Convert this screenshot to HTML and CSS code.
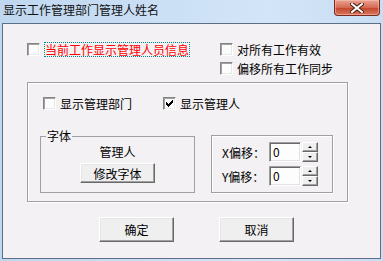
FILE: index.html
```html
<!DOCTYPE html>
<html>
<head>
    <meta charset="utf-8">
    <link rel="stylesheet" href="styles.css">
</head>
<body>
    <div class="window">
        <div class="titlebar">
            <span class="title">显示工作管理部门管理人姓名</span>
            <div class="close-btn">
                <svg width="14" height="10" viewBox="0 0 14 10">
                    <path d="M2 1 L12 9 M12 1 L2 9" stroke="#4a1a12" stroke-width="4" stroke-linecap="square"/>
                    <path d="M2 1 L12 9 M12 1 L2 9" stroke="#fff" stroke-width="2" stroke-linecap="square"/>
                </svg>
            </div>
        </div>
        <div class="client">
            <div class="top-row">
                <label class="check">
                    <span class="box"></span>
                    <span class="text focused">当前工作显示管理人员信息</span>
                </label>
                <div class="check-col">
                    <label class="check"><span class="box"></span><span class="text">对所有工作有效</span></label>
                    <label class="check"><span class="box"></span><span class="text">偏移所有工作同步</span></label>
                </div>
            </div>

            <div class="group main-group">
                <div class="check-row">
                    <label class="check"><span class="box"></span><span class="text">显示管理部门</span></label>
                    <label class="check">
                        <span class="box">
                            <svg class="tick" width="7" height="7" viewBox="0 0 7 7">
                                <path d="M0 2h1v3h-1z M1 3h1v3h-1z M2 4h1v3h-1z M3 3h1v3h-1z M4 2h1v3h-1z M5 1h1v3h-1z M6 0h1v3h-1z" fill="#000"/>
                            </svg>
                        </span>
                        <span class="text">显示管理人</span>
                    </label>
                </div>
                <div class="sub-row">
                    <fieldset class="font-group">
                        <legend>字体</legend>
                        <div class="font-sample">管理人</div>
                        <button class="btn">修改字体</button>
                    </fieldset>
                    <div class="group offset-group">
                        <div class="offset-row">
                            <span class="offset-label">X偏移：</span>
                            <span class="edit">0</span>
                            <span class="spin">
                                <span class="spin-btn"><span class="arrow-up"></span></span>
                                <span class="spin-btn"><span class="arrow-down"></span></span>
                            </span>
                        </div>
                        <div class="offset-row">
                            <span class="offset-label">Y偏移：</span>
                            <span class="edit">0</span>
                            <span class="spin">
                                <span class="spin-btn"><span class="arrow-up"></span></span>
                                <span class="spin-btn"><span class="arrow-down"></span></span>
                            </span>
                        </div>
                    </div>
                </div>
            </div>

            <div class="buttons">
                <button class="btn dlg-btn">确定</button>
                <button class="btn dlg-btn">取消</button>
            </div>
        </div>
    </div>
</body>
</html>
```

FILE: styles.css
```css
:root {
    --frame: #bcd6ef;
    --face: #f3f1f3;
    --btn-face: #f0eff0;
    --edge: #a0a0a0;
    --dark: #696969;
}

body {
    margin: 0;
    font-family: "Noto Sans CJK SC", sans-serif;
    font-size: 12px;
    color: #000;
    background: var(--frame);
}

.window {
    width: 383px;
    height: 261px;
    box-sizing: border-box;
    padding: 0 2px 2px;
    display: flex;
    flex-direction: column;
    background: linear-gradient(to right, #bfd7f0, #d3e5f8 70%, #c8ddf3);
}

.titlebar {
    height: 23px;
    display: flex;
    justify-content: space-between;
    align-items: flex-start;
}

.title {
    padding-left: 1px;
    line-height: 20px;
    color: #111;
}

.close-btn {
    width: 46px;
    height: 16px;
    margin-right: 1px;
    box-sizing: border-box;
    border: 1px solid #7a2a1e;
    border-top: none;
    border-radius: 0 0 4px 4px;
    background: linear-gradient(#e9a494, #d56a52 50%, #c2452c 51%, #d7775c);
    box-shadow: inset 0 0 0 1px rgba(255, 200, 190, 0.5);
    display: flex;
    align-items: center;
    justify-content: center;
}

.client {
    flex: 1;
    border: 1px solid #5c6f84;
    background: var(--face);
}

/* checkboxes */
.check {
    display: flex;
    align-items: center;
    height: 13px;
    line-height: 13px;
}

.box {
    width: 13px;
    height: 13px;
    box-sizing: border-box;
    border: 1px solid;
    border-color: #858585 #fff #fff #858585;
    box-shadow: inset 1px 1px 0 #a2a2a2, inset -1px -1px 0 #e8e8e8;
    background: #fbfcfb;
    flex: none;
    position: relative;
}

.tick {
    display: block;
    margin: 2px 0 0 2px;
}

.text {
    margin-left: 4px;
    white-space: nowrap;
}

.text.focused {
    margin-left: 5px;
    color: #ff0000;
    outline: 1px dotted #008b8b;
}

.top-row {
    display: grid;
    grid-template-columns: 193px auto;
    padding: 19px 0 0 24px;
}

.check-col {
    display: flex;
    flex-direction: column;
    gap: 6px;
}

/* groups */
.group {
    box-sizing: border-box;
    border: 1px solid var(--edge);
    box-shadow: 1px 1px 0 #fff, inset 1px 1px 0 #fff;
}

.main-group {
    margin: 7px 0 0 24px;
    width: 321px;
    height: 120px;
    padding: 14px 0 0 12px;
}

.check-row {
    display: grid;
    grid-template-columns: 120px auto;
    margin-left: 3px;
}

.sub-row {
    display: flex;
    align-items: flex-start;
    gap: 16px;
    margin-top: 20px;
}

.font-group {
    width: 155px;
    box-sizing: border-box;
    margin: 0;
    padding: 3px 0 9px;
    border: 1px solid var(--edge);
    min-width: 0;
    text-align: center;
}

.font-group legend {
    margin-left: 5px;
    padding: 0 1px;
    line-height: 12px;
    text-align: left;
}

.font-sample {
    line-height: 14px;
    margin-bottom: 4px;
}

.offset-group {
    width: 122px;
    margin-top: 5px;
    padding: 6px 0 6px 10px;
    display: flex;
    flex-direction: column;
    gap: 4px;
}

.offset-row {
    display: flex;
    align-items: center;
    height: 20px;
}

.offset-label {
    width: 47px;
    white-space: nowrap;
}

.edit {
    width: 32px;
    height: 20px;
    box-sizing: border-box;
    border: 1px solid;
    border-color: var(--edge) #fff #fff var(--edge);
    box-shadow: inset 1px 1px 0 var(--dark), inset -1px -1px 0 #e3e3e3;
    background: #fcfdfc;
    padding-left: 3px;
    line-height: 18px;
}

.spin {
    margin-left: 1px;
    display: flex;
    flex-direction: column;
}

.spin-btn {
    width: 16px;
    height: 10px;
    box-sizing: border-box;
    border: 1px solid;
    border-color: #fff var(--dark) var(--dark) #fff;
    box-shadow: inset -1px -1px 0 var(--edge);
    background: var(--btn-face);
    display: flex;
    align-items: center;
    justify-content: center;
}

.arrow-up,
.arrow-down {
    width: 0;
    height: 0;
    border-left: 2px solid transparent;
    border-right: 2px solid transparent;
}

.arrow-up {
    border-bottom: 2px solid #000;
}

.arrow-down {
    border-top: 2px solid #000;
}

/* push buttons */
.btn {
    height: 20px;
    width: 75px;
    box-sizing: border-box;
    margin: 0;
    padding: 0;
    border: 1px solid;
    border-color: #fff var(--dark) var(--dark) #fff;
    box-shadow: inset -1px -1px 0 var(--edge), inset 1px 1px 0 #e6e6e6;
    background: var(--btn-face);
    font: inherit;
    color: #000;
}

.dlg-btn {
    height: 25px;
}

.buttons {
    display: flex;
    gap: 45px;
    margin-top: 15px;
    padding-left: 96px;
}
```
